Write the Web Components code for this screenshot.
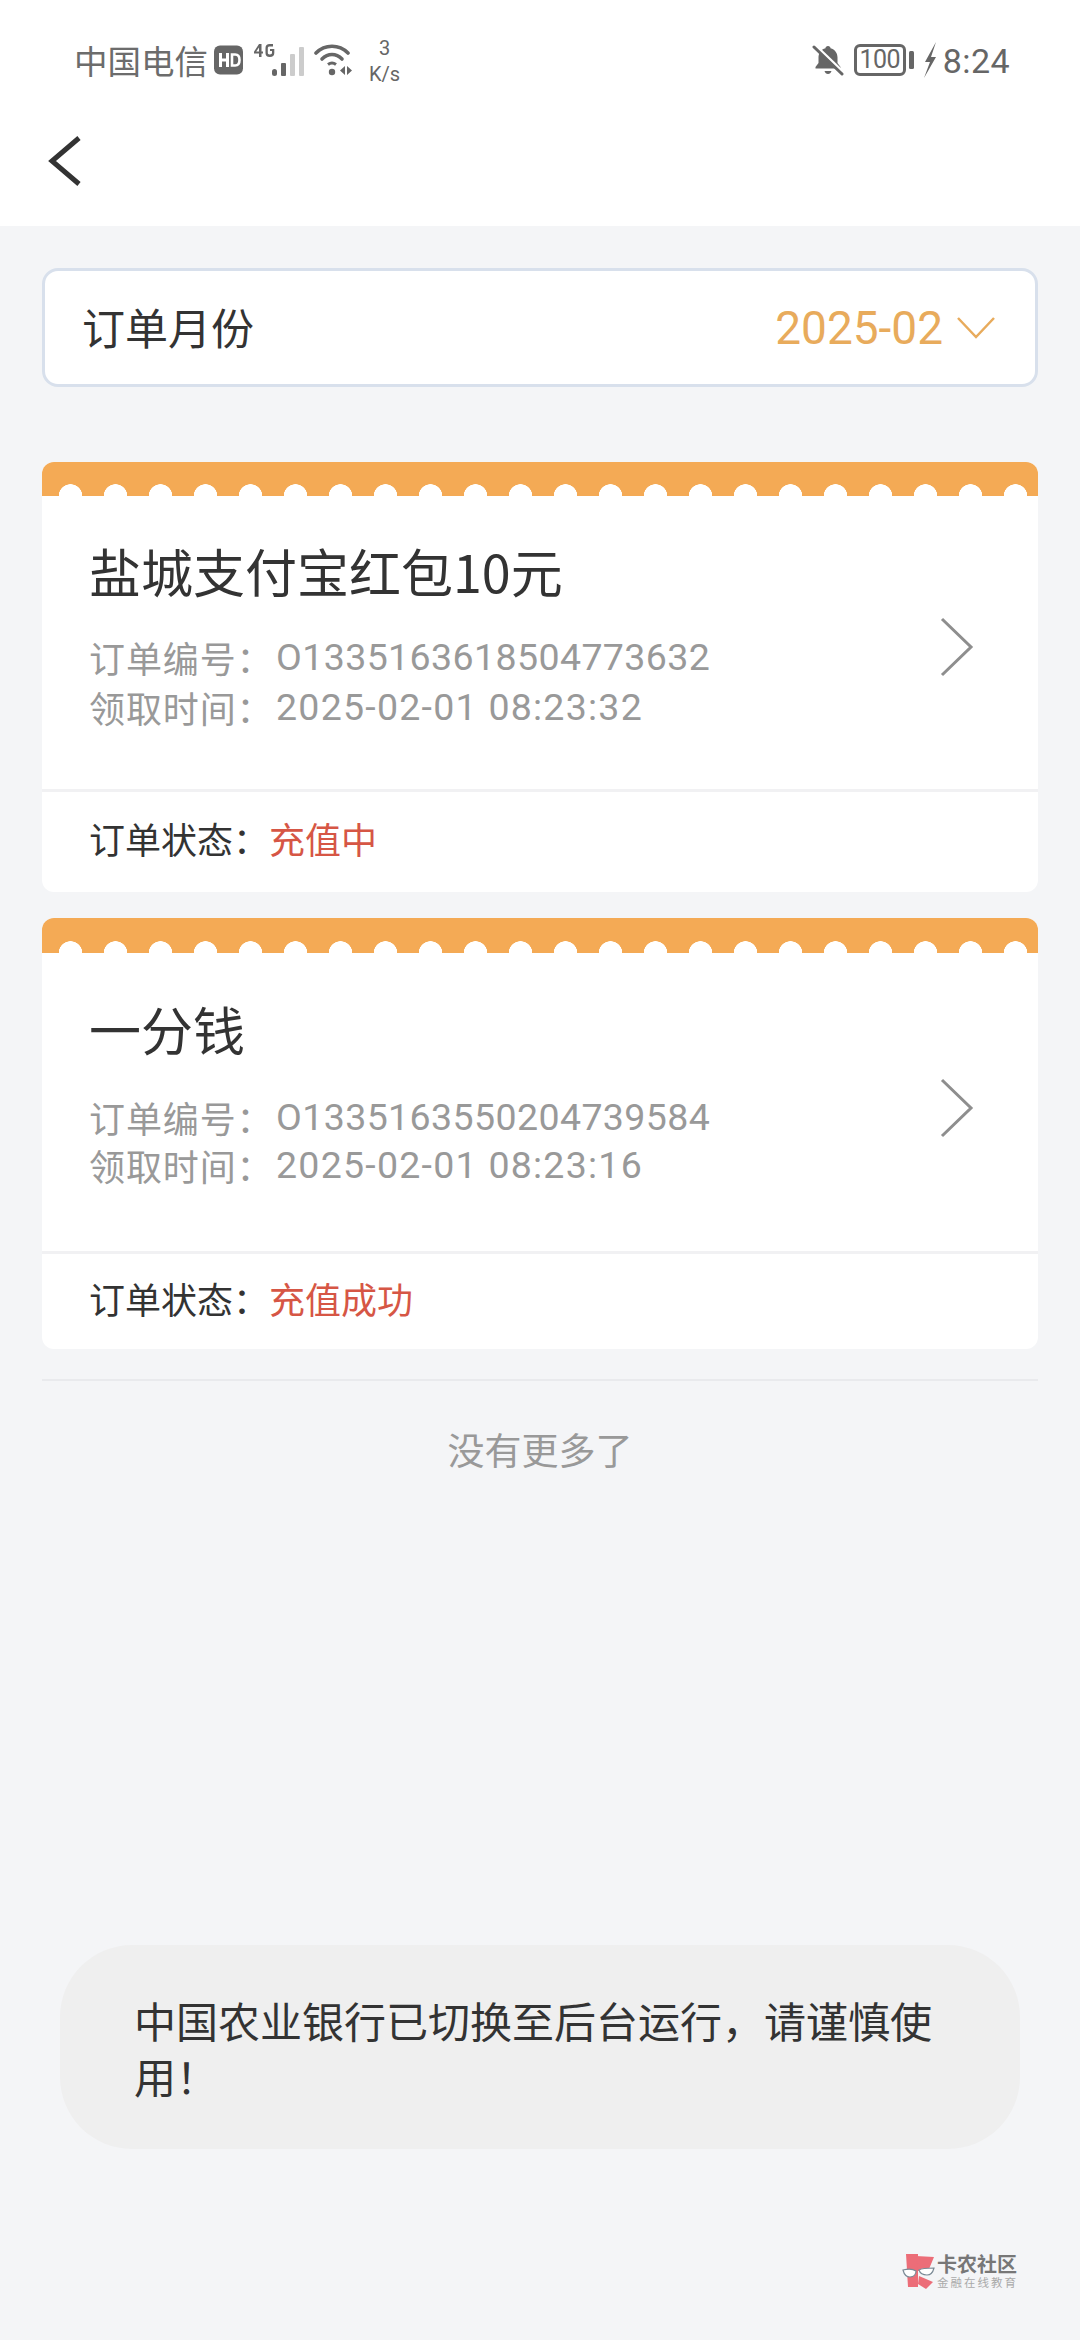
<!DOCTYPE html>
<html lang="zh-CN">
<head>
<meta charset="utf-8">
<title>订单</title>
<style>
    html, body { margin: 0; padding: 0; }
    body {
        width: 1080px;
        height: 2340px;
        overflow: hidden;
        background: #f4f5f7;
        font-family: "Noto Sans CJK SC", "Noto Sans", sans-serif;
    }
</style>
</head>
<body>
<order-page>
    <status-bar slot="top"></status-bar>
    <nav-bar slot="top"></nav-bar>
    <month-select label="订单月份" value="2025-02"></month-select>
    <order-card style="--gap:75px;--band:34px;--body:296px;--pad:45px;--lines-top:31px;--line:50px;--chev:121px;--foot:100px;--foot-pad:9px"
        title="盐城支付宝红包10元" order-no="O1335163618504773632" time="2025-02-01 08:23:32" status="充值中"></order-card>
    <order-card style="--gap:26px;--band:35px;--body:301px;--pad:46px;--lines-top:34px;--line:48px;--chev:125px;--foot:95px;--foot-pad:7px"
        title="一分钱" order-no="O1335163550204739584" time="2025-02-01 08:23:16" status="充值成功"></order-card>
    <list-end>没有更多了</list-end>
    <toast-box>中国农业银行已切换至后台运行，请谨慎使用！</toast-box>
    <water-mark></water-mark>
</order-page>

<script>
    const LATIN = '"Roboto", "Noto Sans CJK SC", sans-serif';

    class OrderPage extends HTMLElement {
        constructor() {
            super();
            this.attachShadow({ mode: 'open' }).innerHTML = `
                <style>
                    :host { display: flex; flex-direction: column; height: 2340px; }
                    header { background: #fff; height: 226px; display: flex; flex-direction: column; }
                    main { display: flex; flex-direction: column; padding: 42px 42px 0; flex: 1; }
                </style>
                <header><slot name="top"></slot></header>
                <main><slot></slot></main>
            `;
        }
    }

    class StatusBar extends HTMLElement {
        constructor() {
            super();
            this.attachShadow({ mode: 'open' }).innerHTML = `
                <style>
                    :host { display: flex; align-items: center; height: 120px; padding: 0 70px 0 74px; color: #666; }
                    .left, .right { display: flex; align-items: center; }
                    .right { margin-left: auto; }
                    .carrier { font-size: 33.500px; line-height: 40px; color: #6c6c6c; }
                    .speed { font: 20px/26px ${LATIN}; text-align: center; margin-left: 15px; margin-top: 2px; }
                    .time { font: 34px/40px ${LATIN}; margin-left: 6px; margin-top: 2px; letter-spacing: 0.4px; }
                    .batt { width: 52px; height: 32px; box-sizing: border-box; border: 3px solid #666; border-radius: 6px;
                            font: 25px/25px ${LATIN}; text-align: center; letter-spacing: -0.5px; }
                    svg { display: block; }
                </style>
                <div class="left">
                    <span class="carrier">中国电信</span>
                    <svg width="30" height="30" viewBox="0 0 30 30" style="margin-left:6px"><rect width="29" height="29" y="0.5" rx="6" fill="#666"/><rect x="5" y="8" width="3" height="14" fill="#fff"/><rect x="12" y="8" width="3" height="14" fill="#fff"/><rect x="7" y="13.5" width="6" height="3" fill="#fff"/><path d="M18 9.500h3.200c2.800 0 4.300 2 4.300 5.500s-1.500 5.500-4.300 5.500H18z" fill="none" stroke="#fff" stroke-width="2.600"/></svg>
                    <svg width="52" height="34" viewBox="0 0 52 34" style="margin-left:10px"><g fill="#666"><path d="M5 1h2.500v7.500H9v2H7.500v3.500H5v-3.500H0V8.700zM5 4.500 2.200 8.500H5zM19 3.600h-3.200c-1.500 0-2 .6-2 1.600v4.600c0 1 .5 1.700 2 1.700s2.200-.6 2.200-1.700V8h-2V6h4.300v4c0 2.700-1.500 3.900-4.500 3.900s-4.300-1.300-4.300-3.900V5c0-2.700 1.500-4 4.300-4H19z"/><rect x="18" y="26" width="5" height="7" rx="2.500"/><rect x="27" y="20" width="5" height="13" rx="1"/></g><rect x="36" y="11" width="5" height="22" rx="1" fill="#ccc"/><rect x="45" y="4" width="5" height="29" rx="1" fill="#ccc"/></svg>
                    <svg width="40" height="34" viewBox="0 0 40 34" style="margin-left:8px"><g fill="none" stroke="#666" stroke-width="3.600" stroke-linecap="round"><path d="M2 10C11 1 25 1 34 10"/><path d="M8 16C14 10 22 10 28 16"/></g><path d="M14 21.500Q18 18.500 22 21.500" fill="none" stroke="#666" stroke-width="3"/><circle cx="18" cy="29" r="3.200" fill="#666"/><path d="M31 23v9l-5-4.500zM33 23v9l5-4.500z" fill="#666"/></svg>
                    <div class="speed">3<br>K/s</div>
                </div>
                <div class="right">
                    <svg width="32" height="32" viewBox="0 0 32 32"><path d="M16 2c1.500 0 2.500 1 2.500 2.200 4.500 1.200 7 4.800 7 9.300v5.500l3 4v1.500H3.500V23l3-4v-5.500c0-4.500 2.500-8 7-9.300C13.500 3 14.500 2 16 2zM12.500 27h7c-.6 2-1.800 3-3.500 3s-2.900-1-3.500-3z" fill="#666"/><path d="M4 2 30 27" stroke="#fff" stroke-width="3"/><path d="M2 3 30 30" stroke="#666" stroke-width="3" stroke-linecap="round"/></svg>
                    <div class="batt" style="margin-left:10px">100</div>
                    <svg width="5" height="18" viewBox="0 0 5 18" style="margin-left:3px"><rect width="5" height="18" rx="1.500" fill="#666"/></svg>
                    <svg width="14" height="36" viewBox="0 0 14 36" style="margin-left:9px"><path d="M13 0 2 20h5L1 36 13 15H8z" fill="#666"/></svg>
                    <span class="time">8:24</span>
                </div>
            `;
        }
    }

    class NavBar extends HTMLElement {
        constructor() {
            super();
            this.attachShadow({ mode: 'open' }).innerHTML = `
                <style>
                    :host { display: flex; align-items: center; height: 82px; padding: 0 0 24px 46px; }
                    svg { display: block; }
                </style>
                <svg width="36" height="50" viewBox="0 0 36 50"><path d="M33 2 6 25l27 23" fill="none" stroke="#333" stroke-width="5"/></svg>
            `;
        }
    }

    class MonthSelect extends HTMLElement {
        connectedCallback() {
            const label = this.getAttribute('label');
            const value = this.getAttribute('value');

            this.attachShadow({ mode: 'open' }).innerHTML = `
                <style>
                    :host { display: flex; align-items: center; box-sizing: border-box; height: 119px; padding: 0 40px 0 37px;
                            background: #fff; border: 3px solid #d8e0ec; border-radius: 16px; }
                    .label { font-size: 43px; color: #333; margin-top: -3px; }
                    .value { font: 46px/50px ${LATIN}; color: #e8ab5c; margin-left: auto; }
                    svg { display: block; margin-left: 14px; }
                </style>
                <span class="label">${label}</span>
                <span class="value">${value}</span>
                <svg width="38" height="24" viewBox="0 0 38 24"><path d="M1 2 19 21 37 2" fill="none" stroke="#e8ab5c" stroke-width="2.500"/></svg>
            `;
        }
    }

    class OrderCard extends HTMLElement {
        connectedCallback() {
            this.attachShadow({ mode: 'open' }).innerHTML = `
                <style>
                    :host { display: block; background: #fff; border-radius: 12px; overflow: hidden; margin-top: var(--gap); }
                    .band { height: var(--band); background-color: #f4aa55;
                            background-image: radial-gradient(circle at 50% 100%, #fff 11.500px, transparent 12px);
                            background-size: 45px 14px; background-repeat: repeat-x; background-position: 6px 100%; }
                    .body { display: flex; align-items: flex-start; height: var(--body); padding: var(--pad) 64px 0 47px; border-bottom: 3px solid #f1f1f3; box-sizing: border-box; }
                    .info { flex: 1; }
                    .title { font-size: 52px; line-height: 60px; color: #333; }
                    .line { font-size: 36px; line-height: var(--line); color: #999; display: flex; }
                    .line b { font-weight: 400; width: 187px; letter-spacing: .9px; }
                    .line span { font-family: ${LATIN}; font-size: 37.500px; letter-spacing: .4px; }
                    .line span.time { letter-spacing: 1.250px; }
                    .lines { margin-top: var(--lines-top); }
                    .foot { height: var(--foot); box-sizing: border-box; padding: 0 0 var(--foot-pad) 47px; display: flex; align-items: center; font-size: 36px; color: #333; }
                    .foot b { font-weight: 400; width: 180px; }
                    .foot span { color: #d65645; }
                    svg { display: block; margin-top: calc(var(--chev) - var(--pad)); }
                </style>
                <div class="band"></div>
                <div class="body">
                    <div class="info">
                        <div class="title">${this.getAttribute('title')}</div>
                        <div class="lines">
                            <div class="line"><b>订单编号：</b><span>${this.getAttribute('order-no')}</span></div>
                            <div class="line"><b>领取时间：</b><span class="time">${this.getAttribute('time')}</span></div>
                        </div>
                    </div>
                    <svg width="34" height="60" viewBox="0 0 34 60"><path d="M2 2 31 30 2 58" fill="none" stroke="#8e8e8e" stroke-width="3"/></svg>
                </div>
                <div class="foot"><b>订单状态：</b><span>${this.getAttribute('status')}</span></div>
            `;
        }
    }

    class ListEnd extends HTMLElement {
        constructor() {
            super();
            this.attachShadow({ mode: 'open' }).innerHTML = `
                <style>
                    :host { display: block; margin-top: 30px; border-top: 2px solid #e9eaed; padding-top: 43px;
                            text-align: center; font-size: 37px; line-height: 50px; color: #999; }
                </style>
                <slot></slot>
            `;
        }
    }

    class ToastBox extends HTMLElement {
        constructor() {
            super();
            this.attachShadow({ mode: 'open' }).innerHTML = `
                <style>
                    :host { display: block; box-sizing: border-box; margin: 471px 18px 0; height: 204px; padding: 47px 74px 0;
                            background: #efefef; border-radius: 72px; font-size: 42px; line-height: 56px; color: #333; }
                </style>
                <slot></slot>
            `;
        }
    }

    class WaterMark extends HTMLElement {
        constructor() {
            super();
            this.attachShadow({ mode: 'open' }).innerHTML = `
                <style>
                    :host { display: flex; align-items: center; align-self: flex-end; margin: 104px 20px 0 0; }
                    .text { margin-left: 2px; }
                    .a { font-size: 20px; line-height: 22px; font-weight: 700; color: #777; }
                    .b { font-size: 11.500px; line-height: 14px; color: #aaa; letter-spacing: 2px; }
                    svg { display: block; }
                </style>
                <svg width="34" height="35" viewBox="0 0 34 35">
                    <path d="M5 0h12v33H7z" fill="#ec6d78"/>
                    <path d="M15 2 33 3 28 15 17 17z" fill="#ec6d78"/>
                    <path d="M18 22 32 28 25 35 17 30z" fill="#ec6d78"/>
                    <path d="M2 16c4-1 10-1 13 1 0 3-2 6-6 6s-6-3-7-7zM18 16c3-2 10-2 15-2-1 4-3 7-7 7s-7-2-8-5z" fill="#fff" stroke="#7b8a96" stroke-width="1.200"/>
                </svg>
                <div class="text">
                    <div class="a">卡农社区</div>
                    <div class="b">金融在线教育</div>
                </div>
            `;
        }
    }

    customElements.define('order-page', OrderPage);
    customElements.define('status-bar', StatusBar);
    customElements.define('nav-bar', NavBar);
    customElements.define('month-select', MonthSelect);
    customElements.define('order-card', OrderCard);
    customElements.define('list-end', ListEnd);
    customElements.define('toast-box', ToastBox);
    customElements.define('water-mark', WaterMark);
</script>
</body>
</html>
